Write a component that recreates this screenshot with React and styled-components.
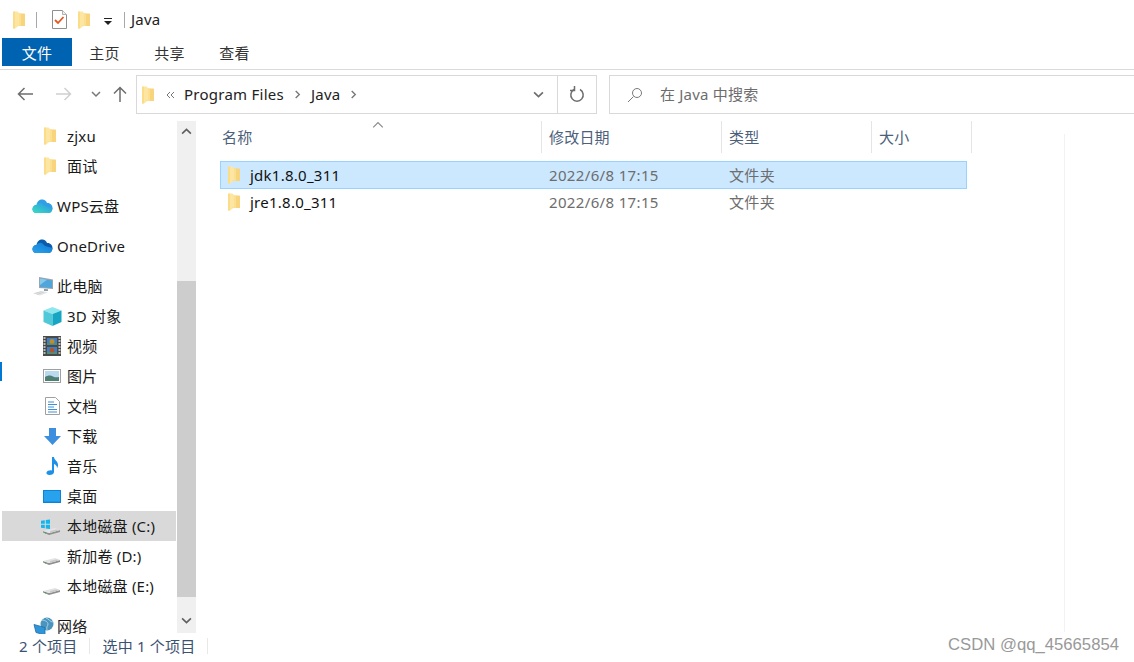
import React from "react"
import styled, { createGlobalStyle } from "styled-components"

const Global = createGlobalStyle`
  html, body { margin: 0; padding: 0; background: #fff; overflow: hidden; }
  body { font-family: "Noto Sans", "Noto Sans CJK SC", sans-serif; }
`

const UI_FONT = `"Noto Sans", "Noto Sans CJK SC", sans-serif`

const Page = styled.div`
  position: relative;
  width: 1134px;
  height: 662px;
  display: flex;
  flex-direction: column;
  overflow: hidden;
  background: #fff;
  color: #1a1a1a;
  font-family: ${UI_FONT};
  font-size: 15px;
  line-height: 20px;
  letter-spacing: 0.2px;
`

/* title bar */
const TitleBar = styled.div`
  height: 38px;
  display: flex;
  align-items: center;
  padding: 1px 0 0 13px;
  box-sizing: border-box;
`
const TitleSep = styled.span`
  width: 1px;
  height: 16px;
  background: #a8a8a8;
  margin: ${p => p.$m};
`
const TitleText = styled.span`
  color: #222;
  margin-bottom: 2px;
`
const QuickIcon = styled.span`
  display: flex;
  margin: ${p => p.$m || 0};
`

/* ribbon tabs */
const Ribbon = styled.div`
  height: 32px;
  padding-left: 2px;
  display: flex;
  align-items: flex-start;
  border-bottom: 1px solid #dadada;
  box-sizing: border-box;
`
const Tab = styled.div`
  height: 28px;
  width: ${p => p.$w}px;
  padding-top: 2px;
  box-sizing: border-box;
  display: flex;
  align-items: center;
  justify-content: center;
  color: ${p => (p.$active ? "#fff" : "#333")};
  background: ${p => (p.$active ? "#0063b1" : "transparent")};
`

/* navigation row */
const NavRow = styled.div`
  height: 51px;
  display: flex;
  align-items: flex-start;
  padding: 5px 0 0 0;
  box-sizing: border-box;
`
const NavButtons = styled.div`
  width: 136px;
  height: 38px;
  flex: none;
  display: flex;
  align-items: center;
  padding-left: 17px;
  box-sizing: border-box;
`
const NavBtn = styled.span`
  display: flex;
  margin-left: ${p => p.$ml || 0}px;
`
const AddressBox = styled.div`
  width: 461px;
  height: 39px;
  flex: none;
  display: flex;
  align-items: center;
  border: 1px solid #d9d9d9;
  box-sizing: border-box;
  padding-left: 5px;
`
const Crumb = styled.span`
  color: #222;
  letter-spacing: 0.25px;
  margin-bottom: 2px;
`
const CrumbIcon = styled.span`
  display: flex;
  margin: ${p => p.$m};
`
const Refresh = styled.span`
  width: 39px;
  height: 37px;
  flex: none;
  border-left: 1px solid #d9d9d9;
  display: flex;
  align-items: center;
  justify-content: center;
  box-sizing: border-box;
`
const SearchBox = styled.div`
  flex: 1;
  height: 39px;
  margin-left: 12px;
  display: flex;
  align-items: center;
  border: 1px solid #d9d9d9;
  border-right: none;
  padding-left: 17px;
  box-sizing: border-box;
  color: #6d6d6d;
`
const SearchGlyph = styled.span`
  display: flex;
  margin-right: 17px;
`
const SearchHint = styled.span`
  margin-bottom: 2px;
`

/* main area */
const Body = styled.div`
  flex: 1;
  display: flex;
  min-height: 0;
`
const Sidebar = styled.nav`
  width: 177px;
  flex: none;
  overflow: hidden;
  padding-left: 2px;
  box-sizing: border-box;
`
const Group = styled.div`
  margin-bottom: 10px;
`
const NavItem = styled.div`
  height: 30px;
  display: flex;
  align-items: center;
  padding-left: ${p => p.$pad}px;
  background: ${p => (p.$selected ? "#d9d9d9" : "transparent")};
  margin-right: 1px;
  box-sizing: border-box;
  color: #1a1a1a;
  white-space: nowrap;
`
const NavIcon = styled.span`
  width: ${p => p.$w}px;
  flex: none;
  display: flex;
  align-items: center;
`
const Scrollbar = styled.div`
  width: 19px;
  flex: none;
  background: #f0f0f0;
  display: flex;
  flex-direction: column;
  height: 512px;
`
const ScrollArrow = styled.div`
  height: ${p => p.$h}px;
  flex: none;
  display: flex;
  align-items: ${p => p.$align};
  justify-content: center;
  padding: 5px 0 7px;
  box-sizing: border-box;
`
const ScrollGap = styled.div`
  height: 141px;
  flex: none;
`
const ScrollThumb = styled.div`
  flex: 1;
  background: #cdcdcd;
`

const Content = styled.section`
  flex: 1;
  padding-left: 18px;
  min-width: 0;
`
const HeaderRow = styled.div`
  position: relative;
  height: 32px;
  display: grid;
  grid-template-columns: 328px 180px 150px 100px;
  margin-bottom: 8px;
`
const HeaderCell = styled.div`
  display: flex;
  align-items: center;
  padding-left: ${p => p.$pad || 7}px;
  border-right: 1px solid #e5e5e5;
  color: #4c607a;
`
const SortMark = styled.span`
  position: absolute;
  left: 158px;
  top: -2px;
  display: flex;
`
const FileRow = styled.div`
  width: 747px;
  height: ${p => p.$h}px;
  margin-left: 6px;
  display: grid;
  grid-template-columns: 328px 180px 1fr;
  align-items: center;
  box-sizing: border-box;
  background: ${p => (p.$selected ? "#cce8ff" : "transparent")};
  border: 1px solid ${p => (p.$selected ? "#99d1ff" : "transparent")};
`
const NameCell = styled.div`
  display: flex;
  align-items: center;
  padding-left: 7px;
  letter-spacing: 0.25px;
  color: #111;
`
const NameIcon = styled.span`
  width: 22px;
  flex: none;
  display: flex;
`
const MetaCell = styled.div`
  letter-spacing: 0.35px;
  color: #6d6d6d;
`
const Rule = styled.div`
  position: absolute;
  left: 1064px;
  top: 134px;
  width: 1px;
  height: 498px;
  background: #f2f2f2;
`
const EdgeMark = styled.div`
  position: absolute;
  left: 0;
  top: 362px;
  width: 2px;
  height: 19px;
  background: #0078d4;
`

/* status bar */
const StatusBar = styled.footer`
  height: 28px;
  flex: none;
  display: flex;
  align-items: center;
  padding: 0 0 5px 19px;
  box-sizing: border-box;
  color: #3b5272;
  background: #fff;
`
const StatusCell = styled.span`
  white-space: pre;
`
const StatusSep = styled.span`
  width: 1px;
  height: 16px;
  background: #e8e8e8;
  margin: ${p => p.$m};
`
const Watermark = styled.div`
  position: absolute;
  right: 15px;
  bottom: 7px;
  font-family: "Liberation Sans", Arial, sans-serif;
  font-size: 16.7px;
  letter-spacing: 0;
  color: #999;
`

const Folder = () => (
  <svg width="12" height="18" viewBox="0 0 12 18">
    <path d="M4 2.500h7c.6 0 1 .4 1 1V15H4z" fill="#f8d47c" />
    <path d="M0 1.500C0 .8.500.5 1 .5h3.500L6 2v12.500L2 17.500H0z" fill="#fde6a2" />
    <path d="M0 1.500C0 .8.500.5 1 .5h1V17.500H0z" fill="#fbdc88" />
    <path d="M6 2.500h2V15H3l3-1z" fill="#fcdf90" />
  </svg>
)

const CheckDoc = () => (
  <svg width="15" height="19" viewBox="0 0 15 19">
    <path d="M.5.5h10l4 4v14H.5z" fill="#fff" stroke="#8f8f8f" />
    <path d="M10.500.5v4h4" fill="#eee" stroke="#b0b0b0" />
    <path d="M3 10l3 3 5.500-6" fill="none" stroke="#e8561d" strokeWidth="1.800" />
  </svg>
)

const Cloud = ({ id, a, b, c }) => (
  <svg width="21" height="16" viewBox="0 0 21 16">
    <defs>
      <linearGradient id={id} x1="0" y1="1" x2="1" y2="0">
        <stop offset="0" stopColor={c} />
        <stop offset="1" stopColor={b} />
      </linearGradient>
    </defs>
    <path d="M1 13c-1.500-3 .5-6 3.500-6C5 3 8 1 11 1.500c2 .3 3.500 2 4 3.500 3-.5 5.500 2 5.500 5 0 3-2 5-4 5H4c-1.500 0-2.500-1-3-2z" fill={a} />
    <path d="M1 13c-1.500-3 .5-6 3.500-6C6 4.500 9 4 11 6l2 2 7.500 2c0 3-2 5-4 5H4c-1.500 0-2.500-1-3-2z" fill={`url(#${id})`} />
  </svg>
)

const PcIcon = () => (
  <svg width="21" height="20" viewBox="0 0 21 20">
    <path d="M6 1l14 2.500V13L6 12z" fill="#9aa5ad" />
    <path d="M7 2.500L19 4.500V12L7 11z" fill="#4fa6dc" />
    <path d="M7 2.500L14 3.700 7 9z" fill="#86c9ee" />
    <path d="M11 13l4 .3v1.700h-4z" fill="#8e9aa3" />
    <path d="M0 17.500l9-2.500 6 1.500-8 3z" fill="#e2e5e8" />
    <path d="M1.500 17.500l7-2M4 18.500l7-2.500" stroke="#c3c8cc" strokeWidth=".7" />
  </svg>
)

const CubeIcon = () => (
  <svg width="19" height="19" viewBox="0 0 19 19">
    <path d="M9.500 0L18.500 3.500 9.500 7 .5 3.500z" fill="#8ee6ee" />
    <path d="M.5 3.500L9.500 7v12L.5 15z" fill="#4fc8d8" />
    <path d="M18.500 3.500L9.500 7v12l9-4z" fill="#16a6c4" />
  </svg>
)

const FilmIcon = () => (
  <svg width="18" height="20" viewBox="0 0 18 20">
    <rect width="18" height="20" fill="#4a4a4a" />
    <path d="M1.500 1v18M16.500 1v18" stroke="#b8b8b8" strokeWidth="2" strokeDasharray="2 1" />
    <rect x="4" y="2" width="10" height="7" fill="#3b7fc4" />
    <rect x="4" y="11" width="10" height="7" fill="#3b7fc4" />
    <circle cx="9" cy="5.500" r="2.500" fill="#c58a2a" />
    <circle cx="9" cy="14.500" r="2.500" fill="#b5522a" />
    <path d="M4 8h10M4 17h10" stroke="#5aa04a" />
  </svg>
)

const PicIcon = () => (
  <svg width="18" height="14" viewBox="0 0 18 14">
    <rect x=".5" y=".5" width="17" height="13" fill="#fff" stroke="#a0a0a0" />
    <rect x="2" y="2" width="14" height="10" fill="#b9d9ef" />
    <path d="M2 8c3-2 6-2 8-.5 2 1 4 1 6 .5v4H2z" fill="#4d7f74" />
  </svg>
)

const DocIcon = () => (
  <svg width="15" height="18" viewBox="0 0 15 18">
    <path d="M.5.5h10l4 4v13H.5z" fill="#fff" stroke="#a0a0a0" />
    <path d="M3 5h6M3 7.500h9M3 10h6M3 12.500h9M3 15h9" stroke="#3d8fd8" />
  </svg>
)

const DownloadIcon = () => (
  <svg width="17" height="17" viewBox="0 0 17 17">
    <path d="M5 0h7v8h5l-8.500 9L0 8h5z" fill="#3d8ede" />
  </svg>
)

const MusicIcon = () => (
  <svg width="13" height="18" viewBox="0 0 13 18">
    <path d="M6 0h2c0 3 4 4 4 8 0 1.500-.5 2.500-1 3 .2-2-1.500-3.500-3-4v8c0 2-2 3-4.500 3C1.500 18 0 17 .5 15.500 1 14 3.500 13 6 13.500z" fill="#1e90e8" />
  </svg>
)

const DesktopIcon = () => (
  <svg width="18" height="13" viewBox="0 0 18 13">
    <rect width="18" height="13" fill="#0a84d8" />
    <rect x="1" y="1" width="16" height="10.500" fill="#29a2ee" />
  </svg>
)

const Drive = ({ win }) => (
  <svg width="20" height="18" viewBox="0 0 20 18">
    <path d="M2 14l0 1.500L8 18l11-3v-2L8 16z" fill="#8f8f8f" />
    <path d="M2 14l12-3 5 2-11 3z" fill="#e4e4e4" />
    <path d="M9 14l6-1.500 4 .5-10 3z" fill="#c9c9c9" />
    <path d="M3.500 15.500l1.500.7" stroke="#3aa655" strokeWidth="1" />
    {win && <path d="M0 3.800L3.800 3.200V6.800H0zM4.800 3L9 2.400V6.800H4.800zM0 7.800h3.800V11.300L0 10.800zM4.800 7.800H9V12L4.800 11.400z" fill="#12b6ec" />}
  </svg>
)

const NetIcon = () => (
  <svg width="21" height="18" viewBox="0 0 21 18">
    <circle cx="14" cy="7" r="6.500" fill="#4b94bd" />
    <path d="M9 3c3 0 6 2 6 4s-2 3-1 6M13 1c3 1 4 4 7 4" stroke="#a9d4ec" fill="none" />
    <path d="M1 7.500l11 3V18L3 15.500z" fill="#2f95d8" stroke="#1f6fa8" strokeWidth=".8" />
  </svg>
)

const Chevron = ({ dir = "down", color = "#6d6d6d", size = 10, weight = 1.5 }) => {
  const d = {
    down: "M1 3l4 4 4-4",
    up: "M1 7l4-4 4 4",
    right: "M3 1l4 4-4 4",
  }[dir]
  return (
    <svg width={size} height={size} viewBox="0 0 10 10">
      <path d={d} fill="none" stroke={color} strokeWidth={weight} />
    </svg>
  )
}

const ArrowLeft = ({ color }) => (
  <svg width="16" height="14" viewBox="0 0 16 14">
    <path d="M16 7H1.500M7.500 1L1.500 7l6 6" fill="none" stroke={color} strokeWidth="1.500" />
  </svg>
)
const ArrowRight = ({ color }) => (
  <svg width="16" height="14" viewBox="0 0 16 14">
    <path d="M0 7h14.500M8.500 1l6 6-6 6" fill="none" stroke={color} strokeWidth="1.500" />
  </svg>
)
const ArrowUp = ({ color }) => (
  <svg width="14" height="16" viewBox="0 0 14 16">
    <path d="M7 16V1.500M1 7.500l6-6 6 6" fill="none" stroke={color} strokeWidth="1.500" />
  </svg>
)

const RefreshIcon = () => (
  <svg width="16" height="17" viewBox="0 0 16 17">
    <path d="M5 3.500a6.200 6.200 0 1 0 6 0" fill="none" stroke="#6d6d6d" strokeWidth="1.500" />
    <path d="M5.500 0v4.500H1" fill="none" stroke="#6d6d6d" strokeWidth="1.500" />
  </svg>
)

const SearchIcon = () => (
  <svg width="16" height="16" viewBox="0 0 16 16">
    <circle cx="10" cy="6" r="4.500" fill="none" stroke="#7a7a7a" />
    <path d="M6.500 9.500L1 15" stroke="#7a7a7a" />
  </svg>
)

const DoubleChevron = () => (
  <svg width="9" height="8" viewBox="0 0 9 8">
    <path d="M4 1L1 4l3 3M8 1L5 4l3 3" fill="none" stroke="#777" />
  </svg>
)

const DropMark = () => (
  <svg width="8" height="7" viewBox="0 0 8 7">
    <rect y="0" width="8" height="1" fill="#222" />
    <path d="M0 3h8L4 7z" fill="#222" />
  </svg>
)

const sideGroups = [
  [
    { label: "zjxu", pad: 42, w: 23, icon: <Folder /> },
    { label: "面试", pad: 42, w: 23, icon: <Folder /> },
  ],
  [{ label: "WPS云盘", pad: 30, w: 25, icon: <Cloud id="wps" a="#2f9fe8" b="#2f8fe6" c="#36e0c0" /> }],
  [{ label: "OneDrive", pad: 30, w: 25, icon: <Cloud id="od" a="#0a5cab" b="#0f78d4" c="#2ba3ea" /> }],
  [
    { label: "此电脑", pad: 31, w: 24, icon: <PcIcon /> },
    { label: "3D 对象", pad: 41, w: 24, icon: <CubeIcon /> },
    { label: "视频", pad: 41, w: 24, icon: <FilmIcon /> },
    { label: "图片", pad: 41, w: 24, icon: <PicIcon /> },
    { label: "文档", pad: 43, w: 22, icon: <DocIcon /> },
    { label: "下载", pad: 42, w: 23, icon: <DownloadIcon /> },
    { label: "音乐", pad: 44, w: 21, icon: <MusicIcon /> },
    { label: "桌面", pad: 41, w: 24, icon: <DesktopIcon /> },
    { label: "本地磁盘 (C:)", pad: 39, w: 26, icon: <Drive win />, selected: true },
    { label: "新加卷 (D:)", pad: 39, w: 26, icon: <Drive /> },
    { label: "本地磁盘 (E:)", pad: 39, w: 26, icon: <Drive /> },
  ],
  [{ label: "网络", pad: 31, w: 24, icon: <NetIcon /> }],
]

const files = [
  { name: "jdk1.8.0_311", date: "2022/6/8 17:15", type: "文件夹", selected: true, h: 28 },
  { name: "jre1.8.0_311", date: "2022/6/8 17:15", type: "文件夹", h: 26 },
]

export default function App() {
  return (
    <Page>
      <Global />
      <TitleBar>
        <Folder />
        <TitleSep $m="0 0 0 11px" />
        <QuickIcon $m="0 0 0 15px"><CheckDoc /></QuickIcon>
        <QuickIcon $m="0 0 0 11px"><Folder /></QuickIcon>
        <QuickIcon $m="3px 0 0 14px"><DropMark /></QuickIcon>
        <TitleSep $m="0 6px 0 12px" />
        <TitleText>Java</TitleText>
      </TitleBar>

      <Ribbon>
        <Tab $w={70} $active>文件</Tab>
        <Tab $w={65}>主页</Tab>
        <Tab $w={65}>共享</Tab>
        <Tab $w={65}>查看</Tab>
      </Ribbon>

      <NavRow>
        <NavButtons>
          <NavBtn><ArrowLeft color="#6d6d6d" /></NavBtn>
          <NavBtn $ml={23}><ArrowRight color="#d0d0d0" /></NavBtn>
          <NavBtn $ml={19}><Chevron color="#777" /></NavBtn>
          <NavBtn $ml={12}><ArrowUp color="#6d6d6d" /></NavBtn>
        </NavButtons>
        <AddressBox>
          <Folder />
          <CrumbIcon $m="0 9px 0 12px"><DoubleChevron /></CrumbIcon>
          <Crumb>Program Files</Crumb>
          <CrumbIcon $m="0 9px 0 9px"><Chevron dir="right" color="#777" size={9} /></CrumbIcon>
          <Crumb>Java</Crumb>
          <CrumbIcon $m="0 0 0 9px"><Chevron dir="right" color="#777" size={9} /></CrumbIcon>
          <CrumbIcon $m="0 13px 0 auto"><Chevron color="#6d6d6d" size={11} /></CrumbIcon>
          <Refresh><RefreshIcon /></Refresh>
        </AddressBox>
        <SearchBox>
          <SearchGlyph><SearchIcon /></SearchGlyph>
          <SearchHint>在 Java 中搜索</SearchHint>
        </SearchBox>
      </NavRow>

      <Body>
        <Sidebar>
          {sideGroups.map((group, i) => (
            <Group key={i}>
              {group.map(item => (
                <NavItem key={item.label} $pad={item.pad} $selected={item.selected}>
                  <NavIcon $w={item.w}>{item.icon}</NavIcon>
                  <span>{item.label}</span>
                </NavItem>
              ))}
            </Group>
          ))}
        </Sidebar>

        <Scrollbar>
          <ScrollArrow $h={19} $align="flex-start"><Chevron dir="up" color="#606060" size={11} /></ScrollArrow>
          <ScrollGap />
          <ScrollThumb />
          <ScrollArrow $h={36} $align="flex-end"><Chevron color="#606060" size={11} /></ScrollArrow>
        </Scrollbar>

        <Content>
          <HeaderRow>
            <SortMark><Chevron dir="up" color="#8a8a8a" size={12} weight={1} /></SortMark>
            <HeaderCell $pad={8}>名称</HeaderCell>
            <HeaderCell>修改日期</HeaderCell>
            <HeaderCell>类型</HeaderCell>
            <HeaderCell>大小</HeaderCell>
          </HeaderRow>
          {files.map(f => (
            <FileRow key={f.name} $selected={f.selected} $h={f.h}>
              <NameCell>
                <NameIcon><Folder /></NameIcon>
                {f.name}
              </NameCell>
              <MetaCell>{f.date}</MetaCell>
              <MetaCell>{f.type}</MetaCell>
            </FileRow>
          ))}
        </Content>
      </Body>

      <StatusBar>
        <StatusCell>2 个项目</StatusCell>
        <StatusSep $m="0 12px 0 12px" />
        <StatusCell>选中 1 个项目</StatusCell>
        <StatusSep $m="0 0 0 12px" />
      </StatusBar>

      <Rule />
      <EdgeMark />
      <Watermark>CSDN @qq_45665854</Watermark>
    </Page>
  )
}
